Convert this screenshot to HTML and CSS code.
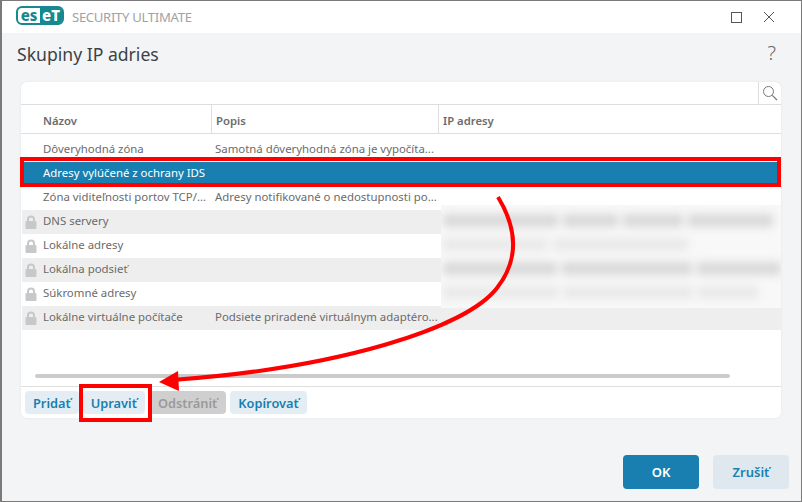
FILE: index.html
```html
<!DOCTYPE html>
<html lang="sk">
<head>
<meta charset="utf-8">
<title>Skupiny IP adries</title>
<link rel="stylesheet" href="styles.css">
</head>
<body>
<div class="window">
  <header class="titlebar">
    <div class="logo"><span class="logo-es">es</span><span class="logo-et">eT</span></div>
    <span class="product">SECURITY ULTIMATE</span>
    <div class="winbtns">
      <svg width="12" height="12" viewBox="0 0 12 12"><rect x="1.5" y="1.5" width="10" height="10" fill="none" stroke="#555" stroke-width="1"/></svg>
      <svg width="12" height="12" viewBox="0 0 12 12"><path d="M1 1l10 10M11 1L1 11" stroke="#555" stroke-width="1" fill="none"/></svg>
    </div>
  </header>
  <main class="content">
    <div class="heading">
      <h1>Skupiny IP adries</h1>
      <span class="help">?</span>
    </div>
    <section class="card">
      <div class="search">
        <div class="search-btn">
          <svg width="16" height="16" viewBox="0 0 16 16"><circle cx="6.5" cy="6.5" r="5" fill="none" stroke="#777" stroke-width="1"/><path d="M10.3 10.3l4.7 4.7" stroke="#777" stroke-width="1.2"/></svg>
        </div>
      </div>
      <div class="thead">
        <div class="cell name">Názov</div>
        <div class="cell desc">Popis</div>
        <div class="cell ip">IP adresy</div>
      </div>
      <div class="tbody">
        <div class="row"><div class="cell name">Dôveryhodná zóna</div><div class="cell desc">Samotná dôveryhodná zóna je vypočíta...</div></div>
        <div class="row selected"><div class="cell name">Adresy vylúčené z ochrany IDS</div></div>
        <div class="row"><div class="cell name">Zóna viditeľnosti portov TCP/...</div><div class="cell desc">Adresy notifikované o nedostupnosti po...</div></div>
        <div class="row alt"><svg class="lock" viewBox="0 0 12 14"><path d="M3 6.5V4.5a3 3 0 0 1 6 0v2" fill="none" stroke="#c8c8c8" stroke-width="2"/><rect x="0.5" y="6" width="11" height="8" rx="1" fill="#c8c8c8"/></svg><div class="cell name">DNS servery</div></div>
        <div class="row"><svg class="lock" viewBox="0 0 12 14"><path d="M3 6.5V4.5a3 3 0 0 1 6 0v2" fill="none" stroke="#c8c8c8" stroke-width="2"/><rect x="0.5" y="6" width="11" height="8" rx="1" fill="#c8c8c8"/></svg><div class="cell name">Lokálne adresy</div></div>
        <div class="row alt"><svg class="lock" viewBox="0 0 12 14"><path d="M3 6.5V4.5a3 3 0 0 1 6 0v2" fill="none" stroke="#c8c8c8" stroke-width="2"/><rect x="0.5" y="6" width="11" height="8" rx="1" fill="#c8c8c8"/></svg><div class="cell name">Lokálna podsieť</div></div>
        <div class="row"><svg class="lock" viewBox="0 0 12 14"><path d="M3 6.5V4.5a3 3 0 0 1 6 0v2" fill="none" stroke="#c8c8c8" stroke-width="2"/><rect x="0.5" y="6" width="11" height="8" rx="1" fill="#c8c8c8"/></svg><div class="cell name">Súkromné adresy</div></div>
        <div class="row alt"><svg class="lock" viewBox="0 0 12 14"><path d="M3 6.5V4.5a3 3 0 0 1 6 0v2" fill="none" stroke="#c8c8c8" stroke-width="2"/><rect x="0.5" y="6" width="11" height="8" rx="1" fill="#c8c8c8"/></svg><div class="cell name">Lokálne virtuálne počítače</div><div class="cell desc">Podsiete priradené virtuálnym adaptéro...</div></div>
        <div class="blurred">
          <div class="blur-inner">
            <div class="blur-line dark"><i class="w1"></i><i class="w2"></i><i class="w3"></i><i class="w4"></i></div>
            <div class="blur-line light"><i class="w5"></i><i class="w6"></i></div>
            <div class="blur-line dark"><i class="w1"></i><i class="w7"></i><i class="w8"></i></div>
            <div class="blur-line light"><i class="w1"></i><i class="w7"></i><i class="w3"></i></div>
          </div>
        </div>
      </div>
      <div class="scroll"><div class="thumb"></div></div>
      <div class="toolbar">
        <button class="btn">Pridať</button>
        <button class="btn">Upraviť</button>
        <button class="btn off">Odstrániť</button>
        <button class="btn">Kopírovať</button>
      </div>
    </section>
    <footer class="actions">
      <button class="act primary">OK</button>
      <button class="act">Zrušiť</button>
    </footer>
  </main>
  <svg class="notes" width="802" height="502" viewBox="0 0 802 502">
    <rect x="22" y="159" width="757" height="26" fill="none" stroke="#f00" stroke-width="4"/>
    <rect x="81" y="386" width="69" height="34" fill="none" stroke="#f00" stroke-width="4"/>
    <path d="M498 197C518 230 519 260 497 288C466 328 340 368 172 380" fill="none" stroke="#f00" stroke-width="4"/>
    <path d="M159 382L178 371L179 391Z" fill="#f00"/>
  </svg>
</div>
</body>
</html>
```
FILE: styles.css
```css
* { box-sizing: border-box; }
html, body { margin: 0; padding: 0; }
body { width: 802px; height: 502px; overflow: hidden; font-family: "Noto Sans", sans-serif; background: #fff; }
.window { position: relative; width: 802px; height: 502px; border: 1px solid #7a7a7a; border-left-width: 2px; display: flex; flex-direction: column; }
.titlebar { height: 32px; background: #fff; display: flex; align-items: center; padding-left: 14px; flex: none; }
.logo { width: 48px; height: 19px; border-radius: 6px; border: 2px solid #17888f; background: #fff; display: flex; align-items: stretch; font: 800 15px/14px "Noto Sans", sans-serif; margin-top: -3px; }
.logo-es { flex: 1; color: #17888f; text-align: center; }
.logo-et { flex: 1; background: #17888f; color: #fff; text-align: center; border-radius: 0 3px 3px 0; }
.product { margin-left: 8px; color: #a0a3a6; font-size: 13.1px; letter-spacing: -0.3px; margin-top: -1px; }
.winbtns { margin-left: auto; display: flex; gap: 21px; padding-right: 26px; }
.content { flex: 1; background: #f3f4f6; display: flex; flex-direction: column; padding: 0 20px 0 19px; }
.heading { height: 49px; display: flex; justify-content: space-between; align-items: center; flex: none; }
.heading h1 { margin: 0 0 8px -4px; font-size: 17.6px; font-weight: 400; color: #3d4245; }
.help { font-size: 20px; color: #666; margin: 0 0 10px; transform: translateX(-5px); font-weight: 300; }
.card { width: 760px; height: 336px; background: #fff; border-radius: 6px; box-shadow: 0 0 3px rgba(0,0,0,.06); display: flex; flex-direction: column; flex: none; }
.search { height: 23px; border-bottom: 1px solid #dedede; display: flex; justify-content: flex-end; flex: none; }
.search-btn { width: 23px; border-left: 1px solid #dedede; display: flex; align-items: center; justify-content: center; }
.thead { height: 29px; display: flex; border-bottom: 1px solid #dedede; flex: none; }
.thead .cell { font-size: 11.3px; font-weight: 600; color: #6c6c6c; height: 28px; line-height: 32px; border-left: 1px solid #dedede; }
.thead .name { border-left: 0; }
.cell { font-size: 11.4px; line-height: 22px; color: #6b6b6b; white-space: nowrap; }
.name { width: 190px; padding-left: 22px; flex: none; }
.desc { width: 227px; padding-left: 4px; flex: none; }
.ip { padding-left: 4px; flex: 1; }
.row .cell { margin-bottom: 2px; }
.tbody { position: relative; padding-top: 4px; height: 228px; flex: none; overflow: hidden; }
.row { height: 24px; display: flex; align-items: center; position: relative; margin-left: 1px; }
.row .name { margin-left: -1px; }
.row.alt { background: #eeeeee; }
.row.selected { background: #187fb0; }
.row.selected .cell { color: #fff; }
.lock { position: absolute; left: 3px; top: 5px; width: 12px; height: 14px; }
.blurred { position: absolute; left: 420px; top: 71px; width: 340px; height: 103px; background: #f8f8f8; overflow: hidden; }
.blur-inner { width: 100%; height: 100%; display: flex; flex-direction: column; justify-content: space-around; filter: blur(4px); padding: 3px 0 3px 2px; }
.blur-line { height: 13px; display: flex; gap: 5px; }
.blur-line i { display: block; height: 100%; }
.dark i { background: #d9d9d9; }
.light i { background: #e9e9e9; }
.w1 { width: 115px; }
.w2 { width: 55px; }
.w3 { width: 60px; }
.w4 { width: 85px; }
.w5 { width: 105px; }
.w6 { width: 135px; }
.w7 { width: 130px; }
.w8 { width: 85px; }
.scroll { flex: 1; display: flex; align-items: center; padding: 0 0 0 14px; }
.thumb { width: 695px; height: 4px; border-radius: 2px; background: #cbcbcb; margin-top: 4px; }
.toolbar { height: 32px; border-top: 1px solid #dedede; padding: 4px 4px 0; display: flex; gap: 4px; flex: none; }
.btn { height: 23px; border: 0; border-radius: 4px; background: #e4edf4; color: #187fb0; font: 600 12.8px "Noto Sans", sans-serif; padding: 0 8px; }
.btn.off { background: #cfcfcf; color: #9a9a9a; padding: 0 9px; }
.actions { display: flex; justify-content: flex-end; gap: 14px; padding: 37px 0 0; margin-right: -8px; }
.act { width: 76px; height: 34px; border: 0; border-radius: 4px; background: #dfe8ee; color: #187fb0; font: 600 13px "Noto Sans", sans-serif; }
.act.primary { background: #187fb0; color: #fff; }
.notes { position: absolute; left: -2px; top: -1px; pointer-events: none; }
```
